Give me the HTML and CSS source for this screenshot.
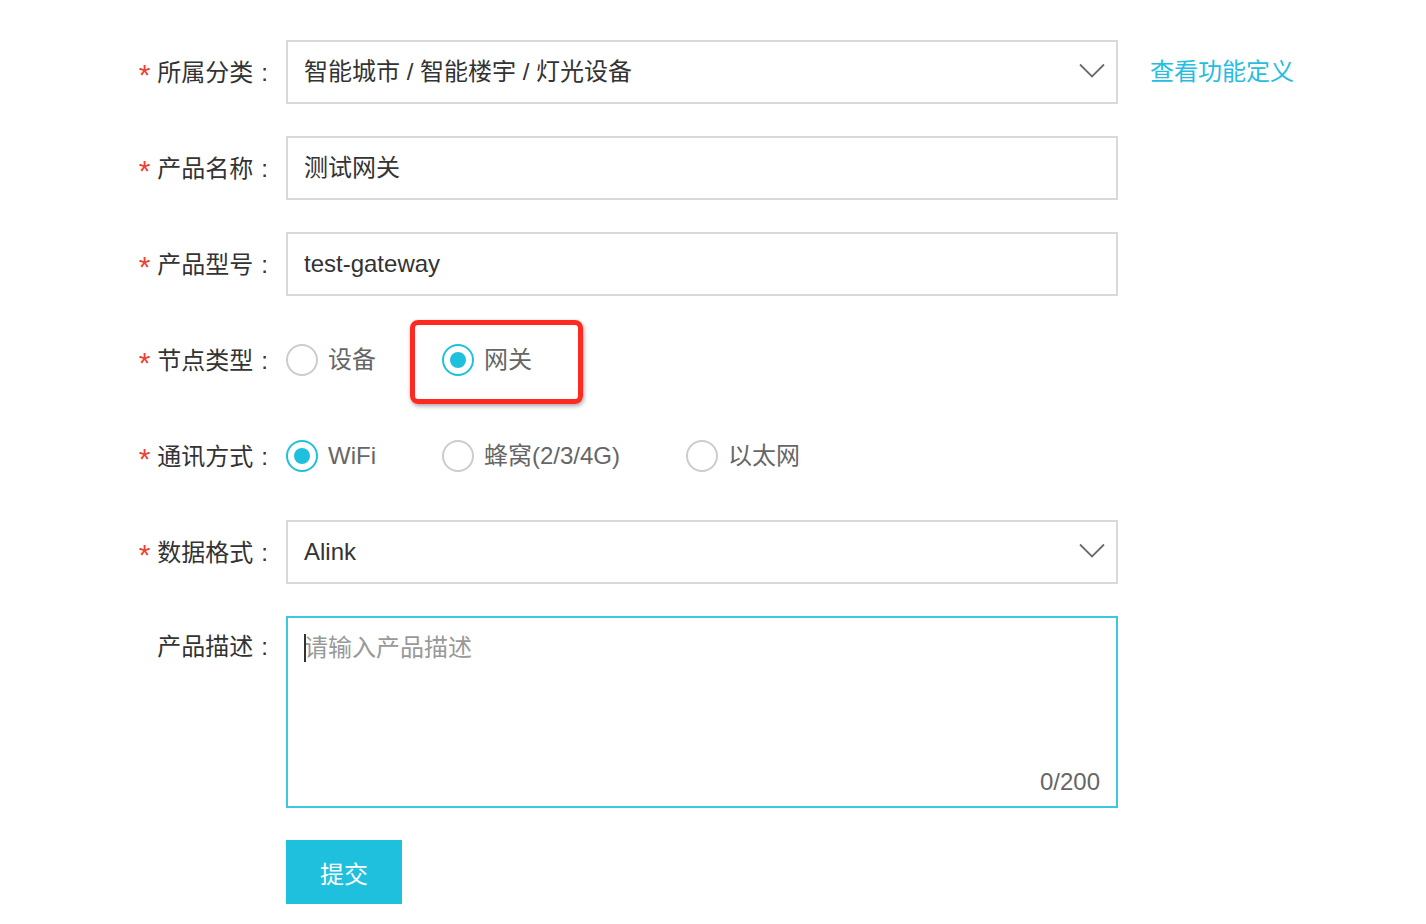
FILE: index.html
```html
<!DOCTYPE html>
<html lang="zh-CN">
<head>
    <meta charset="UTF-8">
    <meta name="viewport" content="width=device-width, initial-scale=1.0">
    <title>创建产品</title>
    <link rel="stylesheet" href="styles.css">
</head>
<body>
    <form class="form">
        <div class="row">
            <label class="label"><span class="req">*</span>所属分类<span class="colon">:</span></label>
            <div class="select">
                <span>智能城市 / 智能楼宇 / 灯光设备</span>
                <svg class="arrow" width="26" height="16" viewBox="0 0 26 16"><path d="M1 1.5 L13 13.5 L25 1.5" fill="none" stroke="#6b6b6b" stroke-width="1.8"/></svg>
            </div>
            <a class="link" href="#">查看功能定义</a>
        </div>
        <div class="row">
            <label class="label"><span class="req">*</span>产品名称<span class="colon">:</span></label>
            <div class="input">测试网关</div>
        </div>
        <div class="row">
            <label class="label"><span class="req">*</span>产品型号<span class="colon">:</span></label>
            <div class="input">test-gateway</div>
        </div>
        <div class="row">
            <label class="label"><span class="req">*</span>节点类型<span class="colon">:</span></label>
            <div class="radios">
                <div class="radio"><span class="circle"></span>设备</div>
                <div class="radio"><span class="circle checked"></span>网关<span class="highlight"></span></div>
            </div>
        </div>
        <div class="row">
            <label class="label"><span class="req">*</span>通讯方式<span class="colon">:</span></label>
            <div class="radios">
                <div class="radio"><span class="circle checked"></span>WiFi</div>
                <div class="radio"><span class="circle"></span>蜂窝(2/3/4G)</div>
                <div class="radio"><span class="circle"></span>以太网</div>
            </div>
        </div>
        <div class="row">
            <label class="label"><span class="req">*</span>数据格式<span class="colon">:</span></label>
            <div class="select">
                <span>Alink</span>
                <svg class="arrow" width="26" height="16" viewBox="0 0 26 16"><path d="M1 1.5 L13 13.5 L25 1.5" fill="none" stroke="#6b6b6b" stroke-width="1.8"/></svg>
            </div>
        </div>
        <div class="row tall">
            <label class="label">产品描述<span class="colon">:</span></label>
            <div class="textarea">
                <div class="placeholder"><span class="caret"></span>请输入产品描述</div>
                <div class="count">0/200</div>
            </div>
        </div>
        <div class="row">
            <div class="label"></div>
            <button type="button" class="submit">提交</button>
        </div>
    </form>
</body>
</html>
```

FILE: styles.css
```css
body {
    margin: 0;
    background: #fff;
    font-family: "Liberation Sans", "Noto Sans CJK SC", sans-serif;
    font-size: 24px;
    line-height: 32px;
    color: #333;
}
.form {
    padding-top: 40px;
}
.row {
    display: flex;
    align-items: center;
    height: 64px;
    margin-bottom: 32px;
}
.row.tall {
    height: 192px;
    align-items: flex-start;
}
.label {
    width: 268px;
    padding-right: 18px;
    text-align: right;
    line-height: 61px;
    height: 64px;
    color: #333;
    flex-shrink: 0;
    white-space: nowrap;
}
.req {
    color: #f04134;
    font-size: 30px;
    margin-right: 7px;
    position: relative;
    top: 4px;
}
.colon {
    margin-left: 8px;
}
.select, .input {
    width: 796px;
    height: 60px;
    border: 2px solid #d9d9d9;
    padding: 0 16px;
    display: flex;
    align-items: center;
    justify-content: space-between;
}
.arrow {
    margin-right: -5px;
    margin-top: -2px;
}
.link {
    margin-left: 32px;
    color: #25bde0;
    text-decoration: none;
}
.radios {
    display: flex;
    align-items: center;
    height: 64px;
}
.radio {
    display: flex;
    align-items: center;
    height: 32px;
    margin-right: 66px;
    color: #666;
    position: relative;
}
.circle {
    width: 28px;
    height: 28px;
    border: 2px solid #ccc;
    border-radius: 50%;
    margin-right: 10px;
    position: relative;
}
.circle.checked {
    border-color: #1fc0de;
}
.circle.checked::after {
    content: "";
    position: absolute;
    left: 6px;
    top: 6px;
    width: 16px;
    height: 16px;
    border-radius: 50%;
    background: #1fc0de;
}
.highlight {
    position: absolute;
    left: -32px;
    top: -24px;
    width: 163px;
    height: 74px;
    border: 5px solid #ff2a1f;
    border-radius: 8px;
    box-shadow: 1px 2px 4px rgba(0, 0, 0, 0.35);
}
.textarea {
    width: 796px;
    height: 188px;
    border: 2px solid #3ec7e2;
    padding: 0 16px;
    position: relative;
}
.placeholder {
    line-height: 60px;
    color: #999;
    position: relative;
}
.caret {
    position: absolute;
    left: 0;
    top: 16px;
    width: 2px;
    height: 28px;
    background: #333;
}
.count {
    position: absolute;
    right: 16px;
    bottom: 8px;
    color: #666;
}
.submit {
    width: 116px;
    height: 64px;
    border: none;
    background: #1fc0de;
    color: #fff;
    font-family: inherit;
    font-size: 24px;
    padding: 0;
}
```
